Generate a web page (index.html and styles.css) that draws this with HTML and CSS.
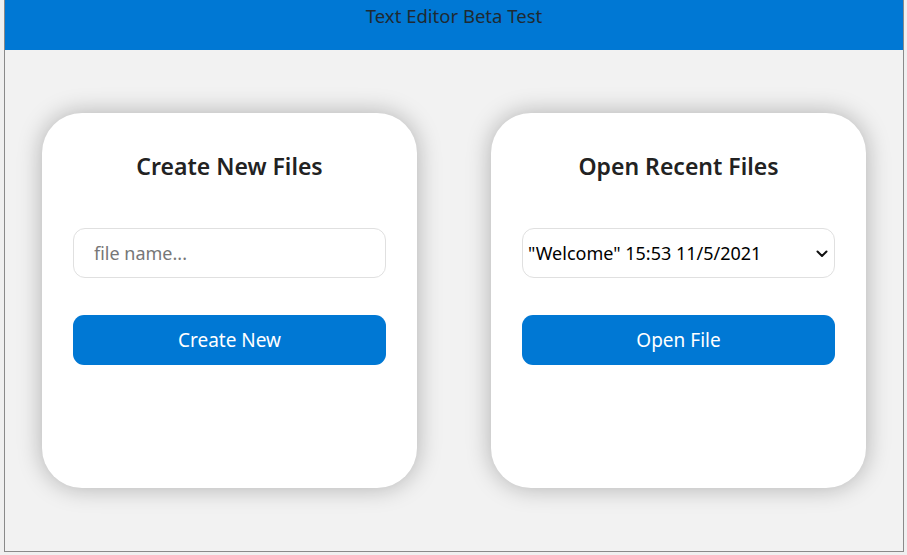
FILE: index.html
```html
<!DOCTYPE html>
<html lang="en">
<head>
<meta charset="utf-8">
<title>Text Editor Beta Test</title>
<link rel="stylesheet" href="styles.css">
</head>
<body>
<div class="frame">
  <header class="topbar">Text Editor Beta Test</header>
  <main class="main">
    <section class="card">
      <h2 class="card-title">Create New Files</h2>
      <input class="field" type="text" placeholder="file name...">
      <button class="btn" type="button">Create New</button>
    </section>
    <section class="card">
      <h2 class="card-title">Open Recent Files</h2>
      <div class="select-wrap">
        <select class="field select">
          <option>"Welcome" 15:53 11/5/2021</option>
        </select>
        <svg class="chev" width="12" height="8" viewBox="0 0 12 8"><path d="M1.5 1.5 L6 6 L10.5 1.5" fill="none" stroke="#111" stroke-width="2" stroke-linecap="round" stroke-linejoin="round"/></svg>
      </div>
      <button class="btn" type="button">Open File</button>
    </section>
  </main>
</div>
</body>
</html>
```
FILE: styles.css
```css
html, body {
  margin: 0;
  padding: 0;
  background: #f0f0f0;
  font-family: "Segoe UI", "Noto Sans", "Open Sans", sans-serif;
}
.frame {
  margin-left: 4px;
  width: 898px;
  height: 551px;
  border: 1px solid #8a8a8a;
  border-top: none;
  background: #f2f2f2;
  display: flex;
  flex-direction: column;
}
.topbar {
  height: 50px;
  box-sizing: border-box;
  background: #0078d4;
  color: #1f2a33;
  text-align: center;
  font-size: 18.5px;
  line-height: 24px;
  padding-top: 4px;
}
.main {
  flex: 1;
  display: flex;
  justify-content: center;
  align-items: center;
  gap: 74px;
}
.card {
  width: 375px;
  height: 375px;
  box-sizing: border-box;
  background: #fff;
  border-radius: 40px;
  box-shadow: 0 0 24px rgba(0, 0, 0, 0.28);
  padding: 37px 31px;
  display: flex;
  flex-direction: column;
}
.card-title {
  margin: 0 0 46px;
  text-align: center;
  font-size: 23px;
  font-weight: 600;
  line-height: 32px;
  color: #222;
}
.field {
  width: 313px;
  height: 50px;
  box-sizing: border-box;
  border: 1px solid #e0e0e0;
  border-radius: 12px;
  background: #fff;
  font-family: inherit;
  font-size: 18px;
  padding: 0 20px;
  color: #111;
  outline: none;
}
.field::placeholder {
  color: #777;
}
.select-wrap {
  position: relative;
  width: 313px;
  height: 50px;
}
.select {
  appearance: none;
  -webkit-appearance: none;
  padding: 0 0 0 5px;
  color: #000;
}
.chev {
  position: absolute;
  right: 7px;
  top: 22px;
  pointer-events: none;
}
.btn {
  margin-top: 37px;
  width: 313px;
  height: 50px;
  border: none;
  border-radius: 11px;
  background: #0078d4;
  color: #fff;
  font-family: inherit;
  font-size: 19px;
  cursor: pointer;
}
```
